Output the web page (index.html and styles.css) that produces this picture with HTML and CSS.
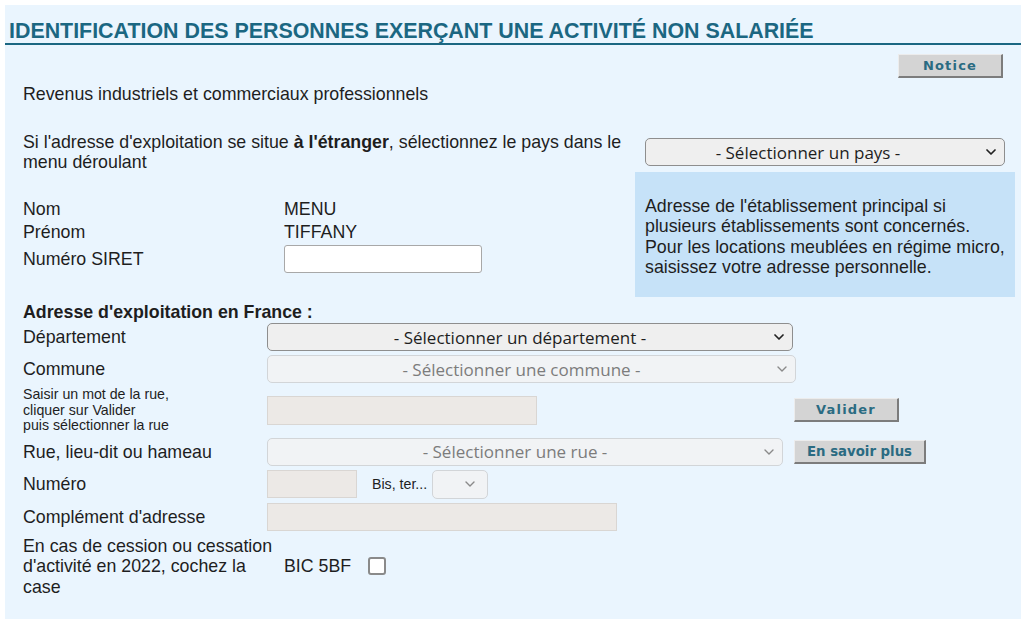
FILE: index.html
```html
<!DOCTYPE html>
<html lang="fr">
<head>
<meta charset="utf-8">
<title>Identification</title>
<link rel="stylesheet" href="styles.css">
</head>
<body>
<div class="panel">
  <h1 class="title">IDENTIFICATION DES PERSONNES EXERÇANT UNE ACTIVITÉ NON SALARIÉE</h1>
  <div class="notice-row"><button class="btn btn-notice" type="button">Notice</button></div>
  <div class="content">
    <p class="intro">Revenus industriels et commerciaux professionnels</p>
    <div class="top-grid">
      <p class="foreign">Si l'adresse d'exploitation se situe <strong class="em">à l'étranger</strong>, sélectionnez le pays dans le menu déroulant</p>
      <div class="pays-cell">
        <div class="sel-wrap sel-pays">
          <select class="sel sel-pad-wide"><option>- Sélectionner un pays -</option></select>
          <svg class="chev" width="10" height="6" viewBox="0 0 10 6"><path d="M1 1 L5 5 L9 1" fill="none" stroke="#222" stroke-width="1.7" stroke-linecap="round" stroke-linejoin="round"/></svg>
        </div>
      </div>
      <div class="identity">
        <div class="id-row"><span>Nom</span><span>MENU</span></div>
        <div class="id-row"><span>Prénom</span><span>TIFFANY</span></div>
        <div class="id-row siret"><span>Numéro SIRET</span><input class="siret-input" type="text"></div>
      </div>
      <div class="info">Adresse de l'établissement principal si<br>plusieurs établissements sont concernés.<br>Pour les locations meublées en régime micro,<br>saisissez votre adresse personnelle.</div>
    </div>

    <h2 class="addr-title">Adresse d'exploitation en France :</h2>
    <div class="addr-grid">
      <div class="lbl">Département</div>
      <div class="ctrl">
        <div class="sel-wrap w-dep">
          <select class="sel"><option>- Sélectionner un département -</option></select>
          <svg class="chev" width="10" height="6" viewBox="0 0 10 6"><path d="M1 1 L5 5 L9 1" fill="none" stroke="#222" stroke-width="1.7" stroke-linecap="round" stroke-linejoin="round"/></svg>
        </div>
      </div>

      <div class="lbl">Commune</div>
      <div class="ctrl">
        <div class="sel-wrap w-com">
          <select class="sel" disabled><option>- Sélectionner une commune -</option></select>
          <svg class="chev" width="10" height="6" viewBox="0 0 10 6"><path d="M1 1 L5 5 L9 1" fill="none" stroke="#8a8a8a" stroke-width="1.4" stroke-linecap="round" stroke-linejoin="round"/></svg>
        </div>
      </div>

      <div class="lbl small">Saisir un mot de la rue,<br>cliquer sur Valider<br>puis sélectionner la rue</div>
      <div class="ctrl">
        <input class="dis-input w-mot" type="text" disabled>
        <button class="btn btn-valider" type="button">Valider</button>
      </div>

      <div class="lbl">Rue, lieu-dit ou hameau</div>
      <div class="ctrl">
        <div class="sel-wrap w-rue">
          <select class="sel" disabled><option>- Sélectionner une rue -</option></select>
          <svg class="chev" width="10" height="6" viewBox="0 0 10 6"><path d="M1 1 L5 5 L9 1" fill="none" stroke="#8a8a8a" stroke-width="1.4" stroke-linecap="round" stroke-linejoin="round"/></svg>
        </div>
        <button class="btn btn-plus" type="button">En savoir plus</button>
      </div>

      <div class="lbl">Numéro</div>
      <div class="ctrl-flex">
        <input class="dis-input w-num" type="text" disabled>
        <span class="bis">Bis, ter...</span>
        <div class="sel-wrap w-bis">
          <select class="sel" disabled><option></option></select>
          <svg class="chev" width="10" height="6" viewBox="0 0 10 6"><path d="M1 1 L5 5 L9 1" fill="none" stroke="#8a8a8a" stroke-width="1.4" stroke-linecap="round" stroke-linejoin="round"/></svg>
        </div>
      </div>

      <div class="lbl">Complément d'adresse</div>
      <div class="ctrl-flex">
        <input class="dis-input w-comp" type="text" disabled>
      </div>
    </div>

    <div class="cession">
      <div class="ces-lbl">En cas de cession ou cessation d'activité en 2022, cochez la case</div>
      <div class="ces-ctrl"><span>BIC 5BF</span><input class="chk" type="checkbox"></div>
    </div>
  </div>
</div>
</body>
</html>
```

FILE: styles.css
```css
* { box-sizing: border-box; }

html, body {
  margin: 0;
  background: #ffffff;
}

body {
  padding: 5px 3px 3px 5px;
  font-family: "Liberation Sans", Arial, sans-serif;
  font-size: 17.8px;
  color: #1e1e1e;
}

.panel {
  background: #eaf5fe;
  height: 614px;
}

.title {
  margin: 0;
  padding: 14px 0 0 4px;
  font-size: 21.4px;
  line-height: 24px;
  font-weight: bold;
  color: #1b6782;
  border-bottom: 2px solid #1b6782;
}

.notice-row {
  display: flex;
  justify-content: flex-end;
  padding-right: 18px;
  margin-top: 9px;
}

.btn {
  height: 24px;
  padding: 0;
  font-family: "DejaVu Sans", Verdana, sans-serif;
  font-weight: bold;
  font-size: 13px;
  letter-spacing: 1.2px;
  color: #2a6b82;
  background: #d4d4d4;
  border-style: solid;
  border-width: 1px 2px 2px 1px;
  border-color: #ececec #7c7c7c #7c7c7c #ececec;
  border-radius: 0;
}

.btn-notice { width: 105px; }
.btn-valider { width: 105px; }
.btn-plus { width: 132px; font-size: 13.3px; letter-spacing: 0; }

.content { padding-left: 18px; }

.intro {
  margin: 6px 0 0;
  line-height: 20px;
}

.top-grid {
  display: grid;
  grid-template-columns: 612px 380px;
  margin-top: 28px;
}

.foreign {
  margin: 0;
  line-height: 20px;
}

.em { font-weight: bold; }

.pays-cell {
  display: flex;
  align-items: center;
  padding-left: 10px;
}

.identity { padding-top: 26px; }

.id-row {
  display: grid;
  grid-template-columns: 261px auto;
  align-items: center;
  height: 23px;
}

.id-row.siret {
  height: 28px;
  margin-top: 1px;
}

.siret-input {
  width: 198px;
  height: 28px;
  background: #ffffff;
  border: 1px solid #a8a8a8;
  border-radius: 3px;
  margin: 0;
}

.info {
  height: 125px;
  background: #c6e2f8;
  padding: 24px 4px 7px 10px;
  line-height: 20.4px;
  color: #1e1e1e;
}

.addr-title {
  margin: 5px 0 0;
  font-size: 17.8px;
  line-height: 21px;
  font-weight: bold;
}

.addr-grid {
  display: grid;
  grid-template-columns: 244px auto;
  row-gap: 4px;
  align-items: center;
}

.lbl { line-height: 20px; }

.lbl.small {
  font-size: 14.2px;
  line-height: 15.5px;
}

.ctrl {
  display: grid;
  grid-template-columns: 527px auto;
  align-items: center;
}

.ctrl-flex {
  display: flex;
  align-items: center;
}

.sel-wrap {
  position: relative;
  height: 28px;
}

.sel {
  -webkit-appearance: none;
  appearance: none;
  width: 100%;
  height: 100%;
  margin: 0;
  padding: 0 24px 0 4px;
  font-family: "Open Sans", "DejaVu Sans", sans-serif;
  font-size: 17px;
  color: #1e1e1e;
  text-align: center;
  text-align-last: center;
  background: #efefef;
  border: 1px solid #8e8e8e;
  border-radius: 5px;
}

.sel-pad-wide { padding-right: 38px; }

.sel:disabled {
  color: #7c7c7c;
  opacity: 1;
  background: #f1f3f5;
  border-color: #d2d5d8;
}

.chev {
  position: absolute;
  right: 9px;
  top: 50%;
  transform: translateY(-50%);
  pointer-events: none;
}

.sel-pays { width: 360px; }
.w-dep { width: 526px; }
.w-com { width: 529px; }
.w-rue { width: 516px; }
.w-bis { width: 56px; height: 29px; margin-left: 5px; }
.w-bis .chev { right: 13px; }

.dis-input {
  height: 28px;
  margin: 0;
  background: #ece9e6;
  border: 1px solid #d9d6d3;
  border-radius: 0;
}

.w-mot { width: 270px; height: 29px; }
.w-num { width: 90px; }
.w-comp { width: 350px; }

.bis {
  margin-left: 15px;
  font-size: 14.2px;
}

.cession {
  display: grid;
  grid-template-columns: 261px auto;
  align-items: center;
  margin-top: 5px;
  line-height: 20.5px;
}

.ces-ctrl {
  display: flex;
  align-items: center;
  gap: 17px;
}

.chk {
  -webkit-appearance: none;
  appearance: none;
  width: 18px;
  height: 18px;
  margin: 0;
  background: #ffffff;
  border: 2px solid #8a8a8a;
  border-radius: 3px;
}
```
